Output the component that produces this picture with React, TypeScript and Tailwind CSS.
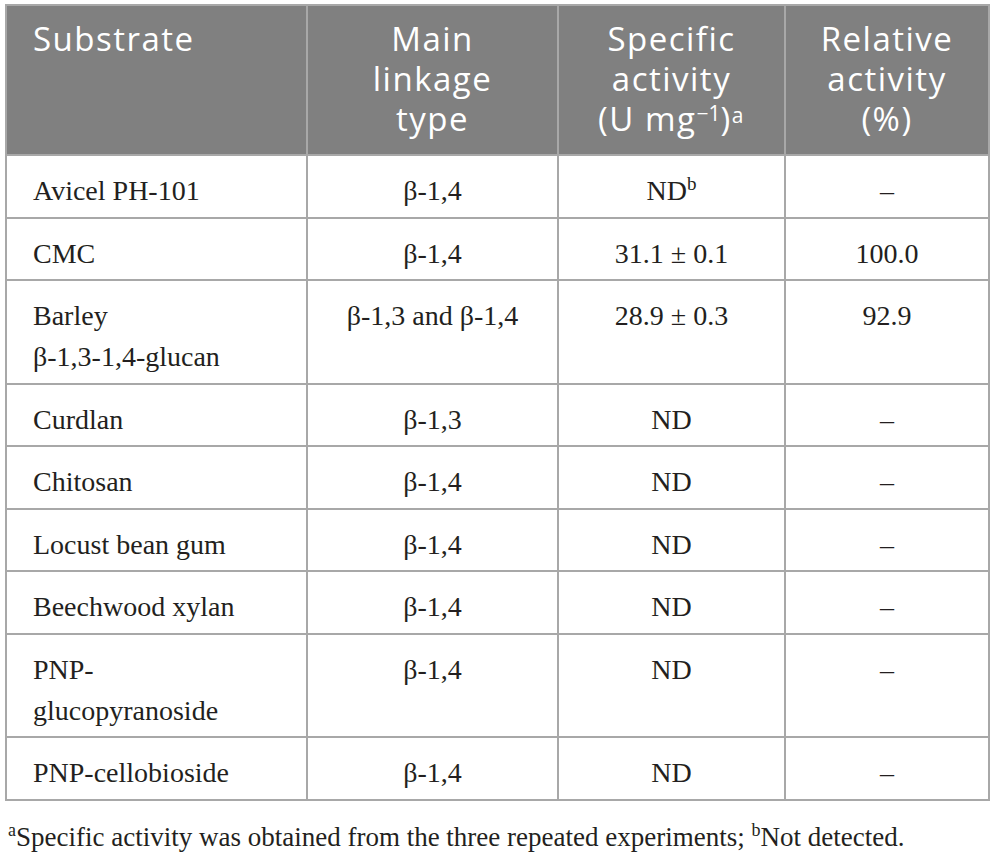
import React from "react";

const serif = { fontFamily: '"Liberation Serif", "Times New Roman", serif' };

type Row = { s: React.ReactNode; l: React.ReactNode; a: React.ReactNode; r: React.ReactNode };

const rows: Row[] = [
  { s: "Avicel PH-101", l: "β-1,4", a: (<>ND<sup className="text-[19px] relative -top-[10px]">b</sup></>), r: "–" },
  { s: "CMC", l: "β-1,4", a: "31.1 ± 0.1", r: "100.0" },
  { s: (<>Barley<br />β-1,3-1,4-glucan</>), l: "β-1,3 and β-1,4", a: "28.9 ± 0.3", r: "92.9" },
  { s: "Curdlan", l: "β-1,3", a: "ND", r: "–" },
  { s: "Chitosan", l: "β-1,4", a: "ND", r: "–" },
  { s: "Locust bean gum", l: "β-1,4", a: "ND", r: "–" },
  { s: "Beechwood xylan", l: "β-1,4", a: "ND", r: "–" },
  { s: (<>PNP-<br />glucopyranoside</>), l: "β-1,4", a: "ND", r: "–" },
  { s: "PNP-cellobioside", l: "β-1,4", a: "ND", r: "–" },
];

export default function App() {
  const th = "border-2 border-[#a8a8a8] align-top pt-[13px] pb-[15px] font-normal leading-[40px] tracking-[1.5px]";
  const td = "border-2 border-[#a8a8a8] align-top pt-[14px] pb-[5.5px] leading-[41px] text-[28px] text-[#231f20]";
  return (
    <div className="w-[995px] h-[858px] bg-white overflow-hidden pt-[4px] pl-[5px]">
      <table className="border-collapse table-fixed w-[983px]">
        <colgroup>
          <col className="w-[301px]" />
          <col className="w-[251px]" />
          <col className="w-[227px]" />
          <col className="w-[204px]" />
        </colgroup>
        <thead>
          <tr className="bg-[#808080] text-white text-[33px]" style={{ fontFamily: '"Open Sans", "Noto Sans", sans-serif' }}>
            <th className={`${th} text-left pl-[26px]`}>Substrate</th>
            <th className={`${th} text-center`}>Main<br />linkage<br />type</th>
            <th className={`${th} text-center`}>Specific<br />activity<br />(U mg<sup className="text-[21px] relative -top-[10px] tracking-normal">−1</sup>)<sup className="text-[21px] relative -top-[8px]">a</sup></th>
            <th className={`${th} text-center`}>Relative<br />activity<br />(%)</th>
          </tr>
        </thead>
        <tbody style={serif}>
          {rows.map((r, i) => (
            <tr key={i}>
              <td className={`${td} text-left pl-[26px]`}>{r.s}</td>
              <td className={`${td} text-center`}>{r.l}</td>
              <td className={`${td} text-center`}>{r.a}</td>
              <td className={`${td} text-center`}>{r.r}</td>
            </tr>
          ))}
        </tbody>
      </table>
      <p className="mt-[19px] pl-[3px] text-[27px] leading-[34px] text-[#231f20]" style={serif}>
        <sup className="text-[18px] relative -top-[10px]">a</sup>Specific activity was obtained from the three repeated experiments; <sup className="text-[18px] relative -top-[10px]">b</sup>Not detected.
      </p>
    </div>
  );
}
